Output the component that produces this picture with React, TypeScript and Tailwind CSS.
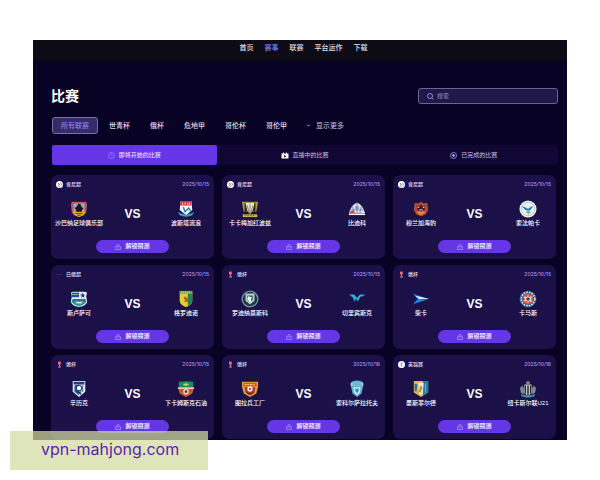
import type { ReactNode } from "react";
import { ChevronDown } from "lucide-react";

type Match = {
    league: string;
    badge: "ball" | "cup" | "flag" | "lion";
    date: string;
    home: string;
    away: string;
};

const navItems = ["首页", "赛事", "联赛", "平台运作", "下载"];
const leagues = ["所有联赛", "世青杯", "俄杯", "危地甲", "哥伦杯", "哥伦甲"];

const matches: Match[] = [
    { league: "肯尼超", badge: "ball", date: "2025/10/15", home: "沙巴纳足球俱乐部", away: "波斯塔流浪" },
    { league: "肯尼超", badge: "ball", date: "2025/10/15", home: "卡卡梅加红波兹", away: "比迪科" },
    { league: "肯尼超", badge: "ball", date: "2025/10/15", home: "穆兰加海豹", away: "索法帕卡" },
    { league: "白俄超", badge: "flag", date: "2025/10/15", home: "斯卢萨可", away: "格罗迪诺" },
    { league: "俄杯", badge: "cup", date: "2025/10/15", home: "罗迪纳莫斯科", away: "切里宾斯克" },
    { league: "俄杯", badge: "cup", date: "2025/10/15", home: "柴卡", away: "卡马斯" },
    { league: "俄杯", badge: "cup", date: "2025/10/15", home: "辛历克", away: "下卡姆斯克石油" },
    { league: "俄杯", badge: "cup", date: "2025/10/16", home: "图拉兵工厂", away: "索科尔萨拉托夫" },
    { league: "英锦赛", badge: "lion", date: "2025/10/16", home: "曼斯菲尔德", away: "纽卡斯尔联U21" },
];

// Club crests, drawn on a 20x20 grid
const crests: Record<string, ReactNode> = {
    沙巴纳足球俱乐部: (
        <>
            <path d="M2 2h16l1 3-1 9c-2 3-5 4-8 5-3-1-6-2-8-5L1 5z" fill="#b9585c" />
            <path d="M4 4h12v9l-6 4-6-4z" fill="#b4a3b4" />
            <path d="M5 9l3-2 1-3 3 1 1 3 2 1-2 3 1 2H6l1-3z" fill="#17131f" />
            <path d="M3 13h14l-2 4-5 2-5-2z" fill="#e5a72c" />
            <path d="M6 15h8M8 17h4" stroke="#7b3512" />
        </>
    ),
    波斯塔流浪: (
        <>
            <path d="M4 1h12l1 10-7 6-7-6z" fill="#eef4fa" />
            <path d="M4 1h12v5H3z" fill="#d4353f" />
            <path d="M6 3v2M9 3v2M12 3v2M14 3v2" stroke="#fff" />
            <path d="M7 8l2 5 4-4 2 3" fill="none" stroke="#267cab" strokeWidth="1.6" />
            <path d="M1 13c3 2 6 3 9 3s6-1 9-3l-2 4c-4 2-10 2-14 0z" fill="#3c9cce" />
        </>
    ),
    卡卡梅加红波兹: (
        <>
            <path d="M1 2h18l-2 11H3z" fill="#b59a3c" />
            <path d="M4 3h12v10H4z" fill="#2a2730" />
            <path d="M5 3h10l-2 9-3 3-3-3z" fill="#ece9db" />
            <path d="M10 4v13M7 6l2 9M13 6l-2 9" stroke="#8f793a" />
            <path d="M2 16h16v3H2z" fill="#d7bf4f" />
            <path d="M4 17.5h12" stroke="#554619" strokeDasharray="2 1" />
        </>
    ),
    比迪科: (
        <>
            <path d="M10 3c4 1 7 5 9 12H1C3 8 6 4 10 3z" fill="#dfe2f1" />
            <path d="M10 3v12M5 7l2 8M15 7l-2 8M3 11h14" stroke="#7480b4" />
            <path d="M2 13l4-2 2 5H2z" fill="#d24b46" />
            <path d="M8 7h4v3H8z" fill="#8590c0" />
            <path d="M1 16h18" stroke="#fff" strokeWidth="1.5" />
        </>
    ),
    穆兰加海豹: (
        <>
            <path d="M3 3l4 1 3-2 3 2 4-1 1 8-3 5-5 2-5-2-3-5z" fill="#b64c32" />
            <path d="M5 6l3 1 2-2 2 2 3-1-1 5-4 3-4-3z" fill="#3a1d27" />
            <path d="M6 8h2M12 8h2" stroke="#f3a365" strokeWidth="1.5" />
            <path d="M5 14l3-2 2 1 2-1 3 2-5 3z" fill="#ef7e4f" />
            <path d="M8 11h4" stroke="#f4dcc1" />
        </>
    ),
    索法帕卡: (
        <>
            <circle cx="10" cy="10" r="9.5" fill="#eef2f3" />
            <circle cx="10" cy="10" r="7.5" fill="none" stroke="#b3c2c4" />
            <path d="M3 7c3 1 5 1 7 3 2-2 4-3 6-3l-4 5-5-1z" fill="#267fae" />
            <path d="M9 11l4 2-2 3-3-2z" fill="#7cb3a3" />
        </>
    ),
    斯卢萨可: (
        <>
            <path d="M1 3l2-1h14l2 1-1 4 1 6c-1 4-5 5-9 6-4-1-8-2-9-6l1-6z" fill="#e6edf7" />
            <path d="M2 3h8v5H2z" fill="#244c9d" />
            <path d="M2 5h7" stroke="#78c9b0" />
            <path d="M14 3l1 2 2 .2-1.5 1.3.5 2L14 7.4l-1.600 1.100.5-2L11 5.200l2-.2z" fill="#1d3d84" />
            <path d="M3 10h14l1 3c-2 3-5 4-8 5-3-1-6-2-8-5z" fill="#1f64ca" />
            <path d="M3 14l4-3 3 2 3-2 4 3-7 4z" fill="#2ba77a" />
            <path d="M7 14h6" stroke="#fff" strokeWidth="1.5" />
        </>
    ),
    格罗迪诺: (
        <>
            <path d="M3 1h14v11c0 4-4 6-7 7-3-1-7-3-7-7z" fill="#e5cc3a" />
            <path d="M12 4h5v8c0 3-2 5-5 6z" fill="#208659" />
            <path d="M3 1h14v3H3z" fill="#6eac4a" />
            <path d="M7 9l2-2 2 2 2-1-1 4 1 2-3-1-2 1 1-3z" fill="#b0622a" />
            <path d="M5 2.5h10" stroke="#e9e7a3" strokeDasharray="1 1" />
        </>
    ),
    罗迪纳莫斯科: (
        <>
            <circle cx="10" cy="10" r="9.5" fill="#6f939c" />
            <circle cx="10" cy="10" r="8" fill="#1c3643" />
            <path d="M5 4h10v8l-5 4-5-4z" fill="#bad0cc" />
            <path d="M7 6h6v5l-3 3-3-3z" fill="#365964" />
            <path d="M8 7l4 1-1 3 1 3-3-1-2-3z" fill="#eef6f2" />
        </>
    ),
    切里宾斯克: (
        <>
            <path d="M1 5h6l2 3h2l2-3h6l-2 2h-3l-3 6-2-3-2 3-2-5z" fill="#1e9ed1" />
            <path d="M4 6.500h3l2 3M11 9.500l2-3h3" fill="none" stroke="#54c4ea" />
        </>
    ),
    柴卡: (
        <>
            <path d="M1 4l18 6-18 6 5-6z" fill="#1769d8" />
            <path d="M3 6l16 4H8z" fill="#e8f1ff" />
            <path d="M2 14l6-3h6z" fill="#449af2" />
        </>
    ),
    卡马斯: (
        <>
            <circle cx="10" cy="10" r="9.5" fill="#254a82" />
            <circle cx="10" cy="10" r="7.5" fill="none" stroke="#d8d8df" strokeWidth="2" strokeDasharray="2 1" />
            <circle cx="10" cy="10" r="6" fill="#c75a42" />
            <path d="M10 5l1 3 4-1-2 3 2 4-4-2-1 3-1-3-4 1 2-3-2-3 4 1z" fill="#f2e2cb" />
            <circle cx="10" cy="10" r="2" fill="#244c83" />
        </>
    ),
    辛历克: (
        <>
            <path d="M3 1h14v12l-7 6-7-6z" fill="#dce5f4" />
            <path d="M4 2h12v3H4z" fill="#263c7e" />
            <path d="M5 6v7l5 4V5z" fill="#244e99" />
            <path d="M12 6v9M14 6v7" stroke="#2f5ba8" />
            <circle cx="10" cy="9" r="3" fill="#f4f7ff" stroke="#17203f" />
            <path d="M9 12l3 4" stroke="#17203f" strokeWidth="1.5" />
        </>
    ),
    下卡姆斯克石油: (
        <>
            <path d="M2 2c5-1 11-1 16 0v6H2z" fill="#188c5b" />
            <path d="M1 8h18l-2 7-7 4-7-4z" fill="#dc5a2e" />
            <path d="M1 9h18" stroke="#f1e7d2" strokeWidth="1.5" />
            <path d="M7 5h6M10 3v4" stroke="#b7d86a" strokeWidth="1.5" />
            <circle cx="10" cy="13" r="3" fill="#f3e5d0" />
            <path d="M9 12h2v2H9zM4 12h2M14 12h2" stroke="#6b4a32" />
        </>
    ),
    图拉兵工厂: (
        <>
            <path d="M1 2h18v5l-2 8-7 4-7-4-2-8z" fill="#e3a02d" />
            <path d="M3 3h14l1 4H2z" fill="#cf5a32" />
            <path d="M4 5h12" stroke="#ffe5a0" strokeDasharray="2 1" />
            <path d="M4 8h12l-1 6-5 3-5-3z" fill="#b52f2b" />
            <circle cx="10" cy="10" r="3" fill="#f6eddc" />
            <path d="M9.500 9.500h1v1h-1zM6 14l4 2 4-2" stroke="#3a1a1b" fill="none" />
        </>
    ),
    索科尔萨拉托夫: (
        <>
            <path d="M4 2c4-2 8-2 12 0l1 4-2 9-5 4-5-4L3 6z" fill="#5eaed0" />
            <path d="M3 3h14v3H3z" fill="#a9dbe8" />
            <path d="M6 8h8l-1 6-3 3-3-3z" fill="#d2edf2" />
            <path d="M8 9l2 1 2-1v3l-2 3-2-3z" fill="#3b8db4" />
            <path d="M5 4.5h10" stroke="#3585aa" />
        </>
    ),
    曼斯菲尔德: (
        <>
            <path d="M2 1h16v13l-8 5-8-5z" fill="#e7b547" />
            <path d="M12 1h6v13l-6 4z" fill="#287aa0" />
            <path d="M7 3h6l-1 13H8z" fill="#f0eee4" />
            <path d="M3 4l3 1-1 8-2-1z" fill="#276f9b" />
            <path d="M9 6l2 1 1 3-2 1 1 4-2-2-2 2 1-4z" fill="#c79245" />
            <path d="M15 4v10" stroke="#72b5c7" />
        </>
    ),
    纽卡斯尔联U21: (
        <>
            <path d="M6 5h8l1 9-5 4-5-4z" fill="#c3c7c6" />
            <path d="M7 6v9M10 6v11M13 6v9" stroke="#20202b" strokeWidth="1.5" />
            <path d="M8 5V2l2-1 2 1v3z" fill="#78827a" />
            <path d="M1 9l3-3 2 5-1 5-3-2zM19 9l-3-3-2 5 1 5 3-2z" fill="#7b898f" />
            <path d="M2 15c4 3 12 3 16 0l-1 3c-4 2-10 2-14 0z" fill="#3698b1" />
        </>
    ),
};

function Crest({ team }: { team: string }) {
    return (
        <svg viewBox="0 0 20 20" className="size-[18px]" aria-hidden="true">
            {crests[team]}
        </svg>
    );
}

function LeagueBadge({ kind }: { kind: Match["badge"] }) {
    return (
        <svg viewBox="0 0 14 14" className="size-[7px]" aria-hidden="true">
            {kind === "ball" && (
                <>
                    <circle cx="7" cy="7" r="7" fill="#fff" />
                    <path d="M4 5l3 1-2 3M9 4l2 2-1 3M5 10l3 1" fill="none" stroke="#5d586e" strokeWidth="1.5" />
                </>
            )}
            {kind === "cup" && (
                <>
                    <path d="M4 1h6v5L8 9H6L4 6z" fill="#d84560" />
                    <path d="M7 8v3M4 12h6" stroke="#b994bd" strokeWidth="2" />
                    <path d="M6 2v4" stroke="#fff" />
                </>
            )}
            {kind === "flag" && <path d="M1 7h4M8 7h4" stroke="#3f315f" strokeWidth="2" />}
            {kind === "lion" && (
                <>
                    <circle cx="7" cy="7" r="7" fill="#fff" />
                    <path d="M5 3h4v3L8 7l1 4H5l1-4-1-1z" fill="#a9a0bd" />
                </>
            )}
        </svg>
    );
}

function LockIcon() {
    return (
        <svg viewBox="0 0 12 12" className="size-[6px]" fill="none" stroke="#cbbdff" aria-hidden="true">
            <path d="M1 5.5h10V11H1zM3.5 5V3.5a2.5 2.5 0 0 1 5 0V5M6 7.5V9" />
        </svg>
    );
}

function Team({ name }: { name: string }) {
    return (
        <div className="flex w-[54px] flex-col items-center">
            <Crest team={name} />
            <span className="h-[10px] text-[6px] leading-[10px] font-medium whitespace-nowrap text-white">{name}</span>
        </div>
    );
}

function MatchCard({ match }: { match: Match }) {
    return (
        <article className="flex flex-col items-center rounded-[7px] bg-[#1b1048] pt-[5px] pb-[6px]">
            <div className="flex w-full items-center justify-between px-[5px] text-[5px] leading-[8px] font-medium">
                <span className="flex items-center gap-[3px] text-[#e4dff4]">
                    <LeagueBadge kind={match.badge} />
                    {match.league}
                </span>
                <time className="font-[Inter,sans-serif] text-[#a797f0]">{match.date}</time>
            </div>
            <div className="mt-3 flex w-full items-center justify-between px-px">
                <Team name={match.home} />
                <span className="text-[12px] leading-[12px] font-bold text-white">VS</span>
                <Team name={match.away} />
            </div>
            <button
                type="button"
                className="mt-3 flex h-[13px] w-[45%] items-center justify-center gap-1 rounded-full bg-[#6536e6] text-[6px] leading-[13px] font-bold text-[#eee9ff]"
            >
                <LockIcon />
                解锁预测
            </button>
        </article>
    );
}

function StatusTabs() {
    return (
        <div
            role="tablist"
            className="mt-[11px] ml-px grid grid-cols-3 rounded-[3px] bg-[#100735] text-[6px] leading-[10px] text-[#c9c2df]"
        >
            <button
                type="button"
                role="tab"
                aria-selected="true"
                className="mr-1 flex h-5 items-center justify-center gap-1 rounded-[2px] bg-[#6536e6] font-medium text-[#e5dcff]"
            >
                <svg viewBox="0 0 14 14" className="size-[7px]" fill="none" stroke="#b9a5ff" aria-hidden="true">
                    <circle cx="7" cy="7" r="6" />
                    <path d="M7 3v4l3 1" />
                </svg>
                即将开始的比赛
            </button>
            <button type="button" role="tab" aria-selected="false" className="flex h-5 items-center justify-center gap-[3px]">
                <svg viewBox="0 0 16 14" className="h-[7px] w-2" aria-hidden="true">
                    <path d="M1 3h3V1h2v2h4V1h2v2h3v10H1z" fill="#fff" />
                    <path d="M6 6l5 2.5L6 11z" fill="#160b3c" />
                </svg>
                直播中的比赛
            </button>
            <button type="button" role="tab" aria-selected="false" className="flex h-5 items-center justify-center gap-1">
                <svg viewBox="0 0 14 14" className="size-[7px]" fill="none" stroke="#b0a3ef" strokeWidth="1.5" aria-hidden="true">
                    <circle cx="7" cy="7" r="6" />
                    <circle cx="7" cy="7" r="2" fill="#d9d2ff" />
                </svg>
                已完成的比赛
            </button>
        </div>
    );
}

export default function App() {
    return (
        <div
            lang="zh-CN"
            className="relative bg-white px-[33px] py-10 font-['Liberation_Sans','Noto_Sans_CJK_SC',sans-serif]"
        >
            <div className="bg-[#080325]">
                <header className="bg-[#0d0b15] pt-[2px] pb-2">
                    <nav className="flex justify-center gap-[11px] pl-[7px] text-[7px] leading-[11px] font-medium text-[#e2e0e8]">
                        {navItems.map((item) => (
                            <a key={item} href="#" className={item === "赛事" ? "text-[#9683f0]" : ""}>
                                {item}
                            </a>
                        ))}
                    </nav>
                </header>

                <main className="pt-[25px] pr-[9px] pb-px pl-[18px]">
                    <div className="flex items-center justify-between">
                        <h1 className="text-[14px] leading-[20px] font-bold text-white">比赛</h1>
                        <label className="flex h-4 w-[140px] items-center gap-[3px] rounded-[3px] border border-[#6c6298] bg-[#21184a] px-2">
                            <svg viewBox="0 0 14 14" className="size-[7px] shrink-0" fill="none" stroke="#b7adf0" strokeWidth="1.5" aria-hidden="true">
                                <circle cx="6" cy="6" r="5" />
                                <path d="M10 10l3 3" />
                            </svg>
                            <input
                                type="search"
                                aria-label="搜索"
                                placeholder="搜索"
                                className="w-full min-w-0 bg-transparent text-[6px] leading-[10px] text-white outline-none placeholder:text-[#9a91bd]"
                            />
                        </label>
                    </div>

                    {/* League filter */}
                    <div className="mt-[11px] ml-px flex items-center gap-[2px] text-[7px] leading-[15px] text-[#dedbe9]">
                        {leagues.map((league, i) => (
                            <button
                                key={league}
                                type="button"
                                className={
                                    i === 0
                                        ? "rounded-[3px] border border-[#786ea8] bg-[#352b68] px-2 font-medium text-[#8f7cf0]"
                                        : "border border-transparent px-2 font-medium"
                                }
                            >
                                {league}
                            </button>
                        ))}
                        <button type="button" className="flex items-center gap-[5px] pl-2 text-[#c6c1d8]">
                            <ChevronDown className="size-[5px]" strokeWidth={4} />
                            显示更多
                        </button>
                    </div>

                    <StatusTabs />

                    <div className="mt-[10px] mr-[2px] grid grid-cols-3 gap-x-2 gap-y-[6px]">
                        {matches.map((match) => (
                            <MatchCard key={match.home} match={match} />
                        ))}
                    </div>
                </main>
            </div>

            <a
                href="#"
                className="absolute bottom-[10px] left-[10px] bg-[#d3dba1]/73 pt-[8px] pr-[29px] pb-[11px] pl-[31px] font-[Inter,sans-serif] text-[16px] leading-[20px] text-[#5f1ea8]"
            >
                vpn-mahjong.com
            </a>
        </div>
    );
}
